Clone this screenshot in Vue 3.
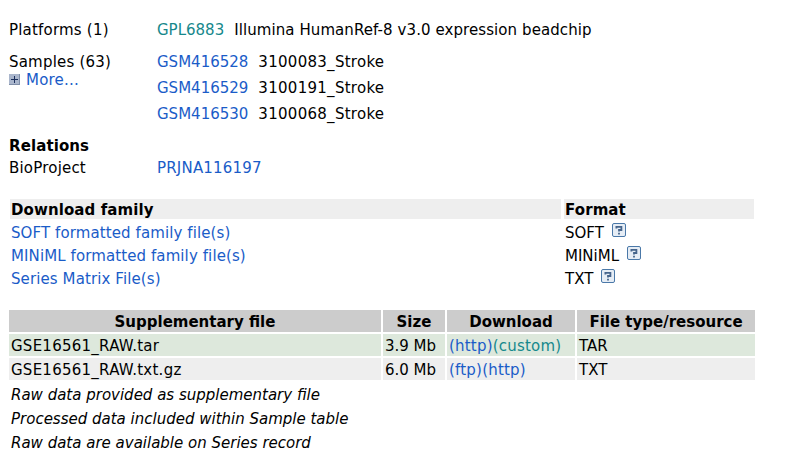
<script setup>
const samples = [
  ['GSM416528', '3100083_Stroke'],
  ['GSM416529', '3100191_Stroke'],
  ['GSM416530', '3100068_Stroke']
]
const family = [
  ['SOFT formatted family file(s)', 'SOFT'],
  ['MINiML formatted family file(s)', 'MINiML'],
  ['Series Matrix File(s)', 'TXT']
]
const notes = [
  'Raw data provided as supplementary file',
  'Processed data included within Sample table',
  'Raw data are available on Series record'
]
</script>

<template>
  <main class="page">
    <section class="info platforms">
      <div class="label">Platforms (1)</div>
      <div class="value"><a class="teal">GPL6883</a><span class="desc">Illumina HumanRef-8 v3.0 expression beadchip</span></div>
    </section>

    <section class="info samples">
      <div class="label">
        <div>Samples (63)</div>
        <div class="more">
          <svg class="plus" width="11" height="11" viewBox="0 0 11 11">
            <rect width="11" height="11" fill="#7f8ea8" />
            <rect x="0" y="0" width="10" height="10" fill="#aab6cc" />
            <path d="M2 5.5h7M5.5 2v7" stroke="#1c2f5c" stroke-width="1" />
          </svg>
          <a>More...</a>
        </div>
      </div>
      <div class="list">
        <div v-for="s in samples" :key="s[0]" class="value"><a>{{ s[0] }}</a><span class="desc">{{ s[1] }}</span></div>
      </div>
    </section>

    <h3 class="relations">Relations</h3>
    <section class="info project">
      <div class="label">BioProject</div>
      <div class="value"><a>PRJNA116197</a></div>
    </section>

    <section class="family">
      <div class="fhead">Download family</div>
      <div class="fhead">Format</div>
      <template v-for="f in family" :key="f[0]">
        <a class="fcell flink">{{ f[0] }}</a>
        <div class="fcell">
          {{ f[1] }}
          <svg class="help" width="14" height="14" viewBox="0 0 14 14">
            <rect x="0.5" y="0.5" width="13" height="13" rx="1.5" fill="#e6edf5" stroke="#4a78a8" />
            <path d="M4.4 5.6V3.8h5v3.2H7v1.6M7 9.8v1.8" fill="none" stroke="#46658c" stroke-width="1.8" />
          </svg>
        </div>
      </template>
    </section>

    <section class="supp">
      <div class="shead">Supplementary file</div>
      <div class="shead">Size</div>
      <div class="shead">Download</div>
      <div class="shead">File type/resource</div>

      <div class="cell green name">GSE16561_RAW.tar</div>
      <div class="cell green">3.9 Mb</div>
      <div class="cell green dl"><a>(http)</a><a class="teal">(custom)</a></div>
      <div class="cell green">TAR</div>

      <div class="cell grey name">GSE16561_RAW.txt.gz</div>
      <div class="cell grey">6.0 Mb</div>
      <div class="cell grey dl"><a>(ftp)</a><a>(http)</a></div>
      <div class="cell grey">TXT</div>
    </section>

    <section class="notes">
      <div v-for="n in notes" :key="n">{{ n }}</div>
    </section>
  </main>
</template>

<style>
html, body { margin: 0; background: #fff; overflow: hidden; }
</style>

<style scoped>
.page {
  width: 807px;
  height: 462px;
  box-sizing: border-box;
  padding-top: 20px;
  overflow: hidden;
  font-family: "DejaVu Sans", Verdana, sans-serif;
  font-size: 15px;
  line-height: 20px;
  color: #000;
}
a { color: #1a5cc8; text-decoration: none; cursor: pointer; }
a.teal { color: #16888c; }
.info {
  display: grid;
  grid-template-columns: 148px 1fr;
  padding-left: 9px;
}
.label { letter-spacing: 0.2px; }
.desc { margin-left: 10px; }
.platforms .desc { letter-spacing: 0.08px; }
.samples .desc { letter-spacing: 0.28px; }
.samples { margin-top: 12px; }
.list { display: flex; flex-direction: column; gap: 6px; }
.more { display: flex; align-items: center; gap: 6px; margin-top: -2px; }
.plus { flex: none; margin-top: -1px; }
.relations {
  margin: 12px 0 0;
  padding-left: 9px;
  font-size: 15px;
  line-height: 20px;
  font-weight: bold;
  letter-spacing: 0.1px;
}
.project { margin-top: 2px; }
.project a { letter-spacing: 0.2px; }
.family {
  display: grid;
  grid-template-columns: 551px 190px;
  column-gap: 3px;
  row-gap: 3px;
  margin: 21px 0 0 10px;
  width: 744px;
}
.fhead {
  background: #eeeeee;
  height: 20px;
  line-height: 22px;
  padding-left: 1px;
  font-weight: bold;
  letter-spacing: 0.1px;
}
.fcell { height: 20px; line-height: 22px; padding-left: 1px; white-space: nowrap; }
.flink { letter-spacing: 0.1px; }
.help { margin-left: 3px; vertical-align: 1px; }
.supp {
  display: grid;
  grid-template-columns: 372px 62px 128px 178px;
  gap: 2px;
  margin: 22px 0 0 9px;
  width: 746px;
}
.shead {
  height: 22px;
  line-height: 25px;
  background: #cccccc;
  text-align: center;
  font-weight: bold;
}
.cell {
  height: 22px;
  line-height: 25px;
  padding-left: 2px;
  white-space: nowrap;
}
.name { letter-spacing: 0.25px; }
.dl { letter-spacing: 0.2px; }
.green { background: #dde8dc; }
.grey { background: #eeeeee; }
.notes {
  margin: 3px 0 0 11px;
  font-style: italic;
  line-height: 24px;
}
</style>
